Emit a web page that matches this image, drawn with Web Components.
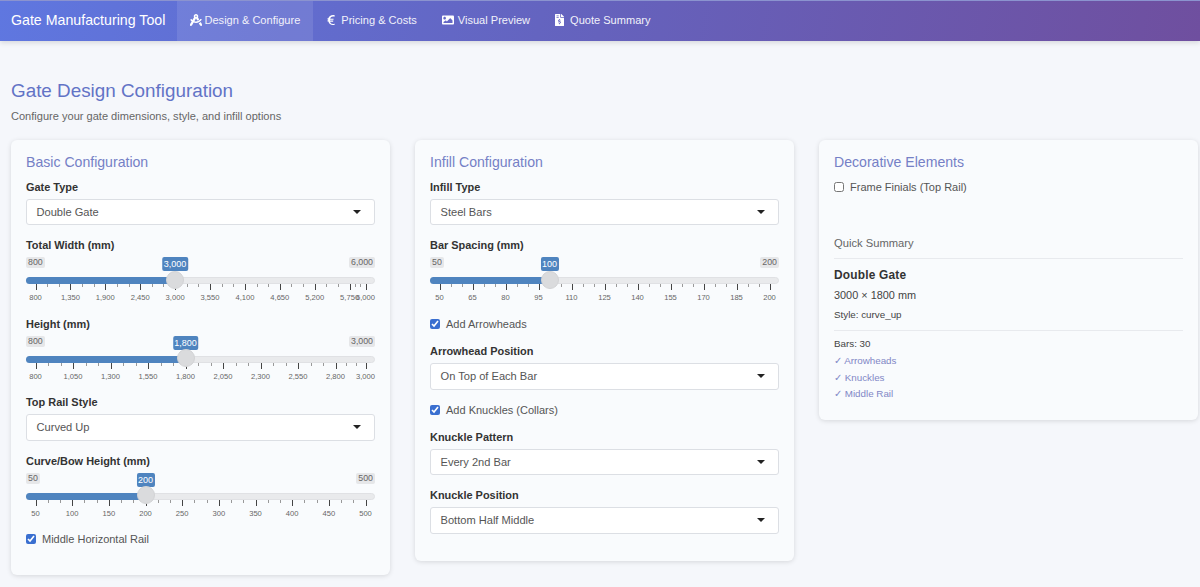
<!DOCTYPE html>
<html>
<head>
<meta charset="utf-8">
<title>Gate Manufacturing Tool</title>
<style>
  html, body { margin: 0; height: 100%; overflow: hidden; }
  body { background: #f5f7fb; font-family: "Liberation Sans", Arial, sans-serif; color: #333; }
</style>
</head>
<body>
<gate-navbar>
  <nav-tab active icon="compass">Design &amp; Configure</nav-tab>
  <nav-tab icon="euro">Pricing &amp; Costs</nav-tab>
  <nav-tab icon="image">Visual Preview</nav-tab>
  <nav-tab icon="file">Quote Summary</nav-tab>
</gate-navbar>

<page-body>
  <config-card heading="Basic Configuration" style="height:435px">
    <select-field label="Gate Type" value="Double Gate"></select-field>
    <range-slider label="Total Width (mm)" min="800" max="6000" value="3000" grid="550"></range-slider>
    <range-slider label="Height (mm)" min="800" max="3000" value="1800" grid="250"></range-slider>
    <select-field label="Top Rail Style" value="Curved Up"></select-field>
    <range-slider label="Curve/Bow Height (mm)" min="50" max="500" value="200" grid="50"></range-slider>
    <check-field checked>Middle Horizontal Rail</check-field>
  </config-card>

  <config-card heading="Infill Configuration" style="height:421px">
    <select-field label="Infill Type" value="Steel Bars"></select-field>
    <range-slider label="Bar Spacing (mm)" min="50" max="200" value="100" grid="15"></range-slider>
    <check-field checked>Add Arrowheads</check-field>
    <select-field label="Arrowhead Position" value="On Top of Each Bar"></select-field>
    <check-field checked>Add Knuckles (Collars)</check-field>
    <select-field label="Knuckle Pattern" value="Every 2nd Bar"></select-field>
    <select-field label="Knuckle Position" value="Bottom Half Middle"></select-field>
  </config-card>

  <config-card heading="Decorative Elements" style="height:280px">
    <check-field>Frame Finials (Top Rail)</check-field>
    <quick-summary></quick-summary>
  </config-card>
</page-body>

<script>
const ICONS = {
  // drafting compass
  compass: '<svg viewBox="0 0 512 512" width="12" height="12"><path fill="currentColor" d="M457.01 344.42c-25.05 20.33-52.63 37.18-82.54 49.05l54.38 94.19 53.95 23.04c9.81 4.19 20.89-2.21 22.17-12.8l7.02-58.25-54.98-95.23zm42.49-94.56c4.86-7.67 1.89-17.99-6.05-22.39l-28.07-15.57c-7.48-4.15-16.61-1.46-21.26 5.72C403.01 281.15 332.25 320 256 320c-23.93 0-47.23-4.25-69.41-11.53l67.36-116.68c.7.02 1.34.21 2.04.21s1.35-.19 2.04-.21l51.09 88.5c31.23-8.96 59.56-25.75 82.61-48.92l-51.79-89.71C347.39 128.03 352 112.63 352 96c0-53.02-42.98-96-96-96s-96 42.98-96 96c0 16.63 4.61 32.03 12.05 45.66l-68.3 118.31c-12.55-11.61-23.96-24.59-33.68-39-4.79-7.1-13.97-9.62-21.38-5.33l-27.75 16.07c-7.85 4.54-10.63 14.9-5.64 22.47 15.57 23.64 34.69 44.21 55.98 62.02L0 439.66l7.02 58.25c1.28 10.59 12.35 16.99 22.17 12.8l53.95-23.04 70.8-122.63C186.13 377.28 220.62 384 256 384c99.05 0 190.88-51.01 243.5-134.14zM256 64c17.67 0 32 14.33 32 32s-14.33 32-32 32-32-14.33-32-32 14.33-32 32-32z"/></svg>',
  euro: '<svg viewBox="0 0 320 512" width="10" height="12" preserveAspectRatio="xMaxYMid"><path fill="currentColor" d="M311 428c-1-6-8-11-14-9-13 4-36 9-60 9-66 0-111-40-126-97h118c5 0 10-4 11-9l6-28c1-7-4-13-11-13H105c-1-10-1-21 0-31h138c5 0 10-4 11-9l6-30c1-7-4-13-11-13H114c18-52 61-87 121-87 19 0 37 3 50 6 6 1 12-2 13-8l11-41c2-6-2-13-8-14-15-4-38-7-62-7C134 47 60 106 38 181H12c-7 0-12 5-12 12v30c0 6 5 11 12 11h18c-1 10-1 22 0 31H12c-7 0-12 5-12 12v28c0 7 5 12 12 12h28c19 87 88 148 192 148 29 0 54-5 69-10 6-2 9-8 8-14z"/></svg>',
  image: '<svg viewBox="0 0 512 512" width="12" height="12"><path fill="currentColor" d="M464 448H48c-26.51 0-48-21.49-48-48V112c0-26.51 21.49-48 48-48h416c26.51 0 48 21.49 48 48v288c0 26.51-21.49 48-48 48zM112 120c-30.928 0-56 25.072-56 56s25.072 56 56 56 56-25.072 56-56-25.072-56-56-56zM64 384h384V272l-87.515-87.515c-4.686-4.686-12.284-4.686-16.971 0L208 320l-39.515-39.515c-4.686-4.686-12.284-4.686-16.971 0L64 336v48z"/></svg>',
  file: '<svg viewBox="0 0 384 512" width="9" height="12"><path fill="currentColor" d="M377 105L279 7c-5-5-11-7-17-7h-6v128h128v-6c0-6-2-13-7-17zM224 136V0H24C11 0 0 11 0 24v464c0 13 11 24 24 24h336c13 0 24-11 24-24V160H248c-13 0-24-11-24-24zM64 72c0-4 4-8 8-8h80c4 0 8 4 8 8v16c0 4-4 8-8 8H72c-4 0-8-4-8-8zm0 64c0-4 4-8 8-8h80c4 0 8 4 8 8v16c0 4-4 8-8 8H72c-4 0-8-4-8-8zm144 264v24c0 4-4 8-8 8h-16c-4 0-8-4-8-8v-24c-11-1-23-5-32-11-4-3-4-8-1-11l12-11c3-3 7-3 10-1 4 2 8 3 12 3h28c7 0 12-6 12-13 0-6-4-11-9-12l-45-13c-19-6-32-23-32-43 0-25 19-45 44-46v-24c0-4 4-8 8-8h16c4 0 8 4 8 8v24c11 1 23 5 32 11 4 3 4 8 1 11l-12 11c-3 3-7 3-10 1-4-2-8-3-12-3h-28c-7 0-12 6-12 13 0 6 4 11 9 12l45 13c19 6 32 23 32 43 0 25-19 45-44 46z"/></svg>'
};

class GateNavbar extends HTMLElement {
  constructor() {
    super();
    this.attachShadow({ mode: 'open' });
  }
  connectedCallback() {
    this.shadowRoot.innerHTML = `
      <style>
        :host {
          display: flex;
          height: 40px;
          background: linear-gradient(100deg, #5f77e0 0%, #6464c0 45%, #6f4f9f 100%);
          border-top: 1px solid #8b93cf;
          box-shadow: 0 2px 5px rgba(0, 0, 0, .12);
          color: #fff;
          position: relative;
        }
        .brand {
          font-size: 14.2px;
          line-height: 38px;
          width: 154px;
          padding: 0 12px 0 11px;
          white-space: nowrap;
        }
        .tabs { display: flex; }
      </style>
      <div class="brand">Gate Manufacturing Tool</div>
      <div class="tabs"><slot></slot></div>
    `;
  }
}
customElements.define('gate-navbar', GateNavbar);

class NavTab extends HTMLElement {
  constructor() {
    super();
    this.attachShadow({ mode: 'open' });
  }
  connectedCallback() {
    this.shadowRoot.innerHTML = `
      <style>
        :host {
          display: flex;
          align-items: center;
          gap: 5px;
          padding: 0 12.5px 2px;
          font-size: 11.05px;
          color: #f1f1fa;
          white-space: nowrap;
        }
        :host([active]) { background: rgba(255, 255, 255, .1); gap: 3px; }
        :host([icon=euro]), :host([icon=file]) { gap: 6px; }
        :host([icon=image]) { gap: 4px; }
        svg { display: block; color: #fff; }
      </style>
      ${ICONS[this.getAttribute('icon')]}<slot></slot>
    `;
  }
}
customElements.define('nav-tab', NavTab);

class PageBody extends HTMLElement {
  constructor() {
    super();
    this.attachShadow({ mode: 'open' });
  }
  connectedCallback() {
    this.shadowRoot.innerHTML = `
      <style>
        :host { display: block; padding: 0 11px; }
        h2 {
          margin: 39px 0 0;
          font-size: 18.85px;
          line-height: 22px;
          font-weight: 400;
          color: #6273c6;
        }
        p {
          margin: 7px 0 0;
          font-size: 11.05px;
          line-height: 14px;
          color: #666;
        }
        .grid {
          display: grid;
          grid-template-columns: repeat(3, 379px);
          column-gap: 25px;
          align-items: start;
          margin-top: 17px;
        }
      </style>
      <h2>Gate Design Configuration</h2>
      <p>Configure your gate dimensions, style, and infill options</p>
      <div class="grid"><slot></slot></div>
    `;
  }
}
customElements.define('page-body', PageBody);

class ConfigCard extends HTMLElement {
  constructor() {
    super();
    this.attachShadow({ mode: 'open' });
  }
  connectedCallback() {
    this.shadowRoot.innerHTML = `
      <style>
        :host {
          display: block;
          box-sizing: border-box;
          padding: 14px 15px 0;
          background: #f9fbfd;
          border-radius: 6px;
          box-shadow: 0 1px 5px rgba(0, 0, 0, .13);
        }
        h4 {
          margin: 0 0 9px;
          font-size: 14.1px;
          line-height: 17px;
          font-weight: 400;
          color: #7580c6;
        }
      </style>
      <h4>${this.getAttribute('heading')}</h4>
      <slot></slot>
    `;
  }
}
customElements.define('config-card', ConfigCard);

class SelectField extends HTMLElement {
  constructor() {
    super();
    this.attachShadow({ mode: 'open' });
  }
  connectedCallback() {
    this.shadowRoot.innerHTML = `
      <style>
        :host { display: block; height: 58.3px; }
        label {
          display: block;
          font-size: 10.95px;
          line-height: 14px;
          font-weight: 700;
          color: #333;
          margin-bottom: 5px;
        }
        .box {
          display: flex;
          align-items: center;
          justify-content: space-between;
          box-sizing: border-box;
          height: 26.4px;
          padding: 0 13px 1px 9.5px;
          background: #fff;
          border: 1px solid #dcdfe4;
          border-radius: 3px;
          font-size: 11.1px;
          color: #555;
        }
        .caret {
          width: 0;
          height: 0;
          border: 4px solid transparent;
          border-top: 4px solid #222;
          border-bottom: 0;
        }
      </style>
      <label>${this.getAttribute('label')}</label>
      <div class="box"><span>${this.getAttribute('value')}</span><span class="caret"></span></div>
    `;
  }
}
customElements.define('select-field', SelectField);

class RangeSlider extends HTMLElement {
  constructor() {
    super();
    this.attachShadow({ mode: 'open' });
  }
  connectedCallback() {
    const min = +this.getAttribute('min');
    const max = +this.getAttribute('max');
    const value = +this.getAttribute('value');
    const grid = +this.getAttribute('grid');
    const fmt = n => n.toLocaleString('en-US');
    // the scale runs between the thumb's two end stops
    const pct = n => (n - min) / (max - min) * 100;
    let marks = '';
    const values = [];
    for (let v = min; v < max; v += grid) values.push(v);
    values.push(max);
    values.forEach((v, i) => {
      marks += `<i class="tick big" style="left:${pct(v)}%"></i><b style="left:${pct(v)}%">${fmt(v)}</b>`;
      const next = values[i + 1];
      if (next === undefined) return;
      // two small ticks in every gap, also the short last one
      for (let k = 1; k < 3; k++) {
        marks += `<i class="tick" style="left:${pct(v + (next - v) / 3 * k)}%"></i>`;
      }
    });
    this.shadowRoot.innerHTML = `
      <style>
        :host { display: block; height: 78.6px; }
        label {
          display: block;
          font-size: 10.95px;
          line-height: 14px;
          font-weight: 700;
          color: #333;
        }
        .ion { position: relative; height: 58px; margin-top: 3px; }
        .edge, .val {
          position: absolute;
          top: 2px;
          font-size: 8.8px;
          line-height: 11px;
          padding: 0 2px;
          border-radius: 2px;
          background: #e6e7e9;
          color: #666;
        }
        .edge.lo { left: 0; }
        .edge.hi { right: 0; }
        .val {
          background: #4f84bf;
          color: #fff;
          font-size: 9px;
          line-height: 14px;
          top: 2px;
          padding: 0 1.5px;
          transform: translateX(-50%);
          z-index: 2;
        }
        .track {
          position: absolute;
          left: 0; right: 0;
          top: 22px;
          height: 7px;
          background: #e9eaec;
          border: 1px solid #e0e1e4;
          box-sizing: border-box;
          border-radius: 4px;
        }
        .fill {
          position: absolute;
          left: 0;
          top: 22px;
          height: 7px;
          background: #4f84bf;
          border-radius: 4px 0 0 4px;
        }
        .scale { position: absolute; left: 9.5px; right: 9.5px; top: 0; height: 100%; }
        .thumb {
          position: absolute;
          top: 15.5px;
          width: 18px;
          height: 18px;
          margin-left: -9px;
          box-sizing: border-box;
          border-radius: 50%;
          background: #dadbdd;
          border: 1px solid #d2d3d5;
          z-index: 2;
        }
        .tick {
          position: absolute;
          top: 29px;
          width: 1px;
          height: 3px;
          background: #999;
        }
        .tick.big { height: 6px; background: #444; }
        b {
          position: absolute;
          top: 38px;
          font-size: 7.6px;
          line-height: 9px;
          font-weight: 400;
          color: #666;
          transform: translateX(-50%);
        }
      </style>
      <label>${this.getAttribute('label')}</label>
      <div class="ion">
        <span class="edge lo">${fmt(min)}</span>
        <span class="edge hi">${fmt(max)}</span>
        <div class="track"></div>
        <div class="scale">
          <div class="fill" style="left:-9.5px;width:calc(${pct(value)}% + 9.5px)"></div>
          ${marks}
          <span class="val" style="left:${pct(value)}%">${fmt(value)}</span>
          <div class="thumb" style="left:${pct(value)}%"></div>
        </div>
      </div>
    `;
  }
}
customElements.define('range-slider', RangeSlider);

class CheckField extends HTMLElement {
  constructor() {
    super();
    this.attachShadow({ mode: 'open' });
  }
  connectedCallback() {
    this.shadowRoot.innerHTML = `
      <style>
        :host {
          display: flex;
          align-items: center;
          gap: 6px;
          height: 28px;
          font-size: 11px;
          color: #555;
          margin: -7px 0 0;
        }
        input {
          width: 10px;
          height: 10px;
          margin: 0;
          accent-color: #3a6fd0;
        }
      </style>
      <input type="checkbox" ${this.hasAttribute('checked') ? 'checked' : ''}><span><slot></slot></span>
    `;
  }
}
customElements.define('check-field', CheckField);

class QuickSummary extends HTMLElement {
  constructor() {
    super();
    this.attachShadow({ mode: 'open' });
  }
  connectedCallback() {
    this.shadowRoot.innerHTML = `
      <style>
        :host { display: block; margin-top: 35px; }
        .title {
          font-size: 11.2px;
          line-height: 14px;
          color: #666;
          padding-bottom: 8px;
          border-bottom: 1px solid #e8eaee;
        }
        .name { font-size: 11.9px; line-height: 14px; font-weight: 700; color: #333; margin-top: 9px; letter-spacing: .2px; }
        .dims { font-size: 10.9px; line-height: 14px; color: #444; margin-top: 6px; }
        .style { font-size: 9.8px; line-height: 12px; color: #444; margin-top: 7px; padding-bottom: 9px; border-bottom: 1px solid #e8eaee; }
        .line { font-size: 9.8px; line-height: 16.8px; color: #8187c6; }
        .line.first { color: #444; margin-top: 5px; }
      </style>
      <div class="title">Quick Summary</div>
      <div class="name">Double Gate</div>
      <div class="dims">3000 × 1800 mm</div>
      <div class="style">Style: curve_up</div>
      <div class="line first">Bars: 30</div>
      <div class="line">✓ Arrowheads</div>
      <div class="line">✓ Knuckles</div>
      <div class="line">✓ Middle Rail</div>
    `;
  }
}
customElements.define('quick-summary', QuickSummary);

// a label that follows a checkbox sits a little lower
document.querySelectorAll('check-field + select-field').forEach(el => {
  el.style.marginTop = '6.4px';
});
</script>
</body>
</html>
